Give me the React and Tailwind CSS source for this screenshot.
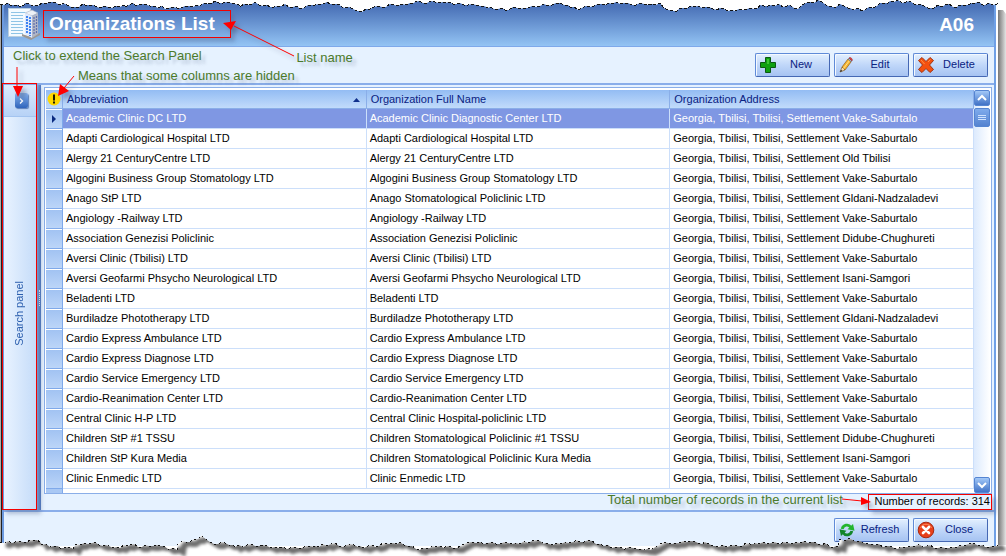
import React from "react";

const VAKE = "Georgia, Tbilisi, Tbilisi, Settlement Vake-Saburtalo";
const OLD = "Georgia, Tbilisi, Tbilisi, Settlement Old Tbilisi";
const GLDANI = "Georgia, Tbilisi, Tbilisi, Settlement Gldani-Nadzaladevi";
const DIDUBE = "Georgia, Tbilisi, Tbilisi, Settlement Didube-Chughureti";
const ISANI = "Georgia, Tbilisi, Tbilisi, Settlement Isani-Samgori";

const ROWS = [
  ["Academic Clinic DC LTD", "Academic Clinic Diagnostic Center LTD", VAKE],
  ["Adapti Cardiological Hospital LTD", "Adapti Cardiological Hospital LTD", VAKE],
  ["Alergy 21 CenturyCentre LTD", "Alergy 21 CenturyCentre LTD", OLD],
  ["Algogini Business Group Stomatology LTD", "Algogini Business Group Stomatology LTD", VAKE],
  ["Anago StP LTD", "Anago Stomatological Policlinic LTD", GLDANI],
  ["Angiology -Railway LTD", "Angiology -Railway LTD", VAKE],
  ["Association Genezisi Policlinic", "Association Genezisi Policlinic", DIDUBE],
  ["Aversi Clinic (Tbilisi) LTD", "Aversi Clinic (Tbilisi) LTD", VAKE],
  ["Aversi Geofarmi Phsycho Neurological LTD", "Aversi Geofarmi Phsycho Neurological LTD", ISANI],
  ["Beladenti LTD", "Beladenti LTD", VAKE],
  ["Burdiladze Phototherapy LTD", "Burdiladze Phototherapy LTD", GLDANI],
  ["Cardio Express Ambulance LTD", "Cardio Express Ambulance LTD", VAKE],
  ["Cardio Express Diagnose LTD", "Cardio Express Diagnose LTD", VAKE],
  ["Cardio Service Emergency LTD", "Cardio Service Emergency LTD", VAKE],
  ["Cardio-Reanimation Center LTD", "Cardio-Reanimation Center LTD", VAKE],
  ["Central Clinic H-P LTD", "Central Clinic Hospital-policlinic LTD", VAKE],
  ["Children StP #1 TSSU", "Children Stomatological Policlinic #1 TSSU", DIDUBE],
  ["Children StP Kura Media", "Children Stomatological Policlinic Kura Media", ISANI],
  ["Clinic Enmedic LTD", "Clinic Enmedic LTD", VAKE],
];

const TOP_EDGE = [
  [0, 4], [10, 4], [20, 6], [25, 4], [38, 5], [50, 2], [63, 4], [75, 7], [85, 4], [100, 7], [125, 6], [135, 4], [150, 5],
  [165, 8], [185, 7], [200, 5], [215, 2], [235, 3], [240, 6], [255, 3], [270, 7], [285, 5], [300, 8], [315, 4], [330, 3],
  [345, 7], [362, 11], [370, 8], [390, 5], [410, 4], [415, 2], [445, 2], [460, 4], [480, 5], [490, 8], [505, 9], [520, 8],
  [540, 6], [560, 3], [570, 6], [578, 9], [590, 6], [605, 4], [612, 3], [640, 4], [660, 4], [669, 11], [680, 9], [690, 6],
  [705, 7], [720, 9], [735, 10], [750, 9], [760, 6], [775, 5], [790, 6], [800, 8], [806, 2], [822, 1], [828, 7], [840, 5],
  [850, 8], [865, 10], [880, 4], [890, 1], [910, 2], [920, 5], [930, 8], [945, 5], [960, 6], [975, 2], [985, 5], [998, 3],
];

const BOTTOM_EDGE = [
  [0, 12], [15, 12], [30, 11], [37, 9], [42, 14], [50, 16], [60, 17], [73, 18], [76, 14], [95, 13], [105, 16], [120, 17],
  [130, 15], [145, 16], [160, 15], [170, 19], [177, 19], [178, 13], [190, 11], [203, 6], [210, 13], [225, 13], [235, 16],
  [255, 15], [275, 17], [290, 18], [315, 16], [335, 14], [345, 17], [350, 13], [360, 17], [375, 16], [385, 13], [400, 13],
  [412, 17], [422, 19], [432, 16], [445, 17], [460, 17], [468, 11], [480, 13], [500, 13], [520, 13], [540, 10], [545, 14],
  [565, 13], [580, 11], [592, 11], [600, 14], [612, 17], [625, 18], [650, 19], [655, 18], [660, 13], [675, 13], [690, 11],
  [705, 13], [715, 16], [730, 16], [755, 13], [780, 13], [810, 12], [825, 14], [832, 17], [838, 16], [840, 10], [850, 9],
  [860, 12], [875, 14], [890, 17], [900, 18], [915, 15], [930, 16], [945, 18], [960, 16], [975, 13], [985, 17], [998, 15],
];

const JITTER = [0, 1, -1, 1, 0, -1, 1, 1, -1, 0, 1];

// Fills the gaps between the anchors with small steps for a ripped-paper outline.
function ragged(anchors) {
  const pts = [];
  let n = 0;
  for (let i = 0; i < anchors.length - 1; i++) {
    const [x0, y0] = anchors[i];
    const [x1, y1] = anchors[i + 1];
    for (let x = x0; x < x1; x += 4) {
      const y = Math.round(y0 + ((y1 - y0) * (x - x0)) / (x1 - x0));
      pts.push(`${x},${y + JITTER[n++ % JITTER.length]}`);
    }
  }
  pts.push(anchors[anchors.length - 1].join(","));
  return pts.join(" ");
}

const TOP_POINTS = ragged(TOP_EDGE);
const BOTTOM_POINTS = ragged(BOTTOM_EDGE);

function TornTop() {
  return (
    <svg className="pointer-events-none absolute top-0 left-0 h-4 w-full" viewBox="0 0 1006 16" preserveAspectRatio="none" aria-hidden="true">
      <polygon points={`0,0 ${TOP_POINTS} 1006,14 1006,0`} fill="#fff" />
      <polyline points={TOP_POINTS} fill="none" stroke="#111" strokeWidth="1" strokeDasharray="3 2" shapeRendering="crispEdges" />
    </svg>
  );
}

function TornBottom() {
  return (
    <svg className="pointer-events-none absolute bottom-0 left-0 h-[26px] w-full" viewBox="0 0 1006 26" preserveAspectRatio="none" aria-hidden="true">
      <defs>
        <filter id="soft" x="-5%" y="-50%" width="110%" height="200%">
          <feGaussianBlur stdDeviation="1.8" />
        </filter>
        <clipPath id="below">
          <polygon points={`0,27 ${BOTTOM_POINTS} 1006,15 1006,27`} />
        </clipPath>
      </defs>
      <polygon points={`0,27 ${BOTTOM_POINTS} 1006,15 1006,27`} fill="#fff" />
      <g clipPath="url(#below)">
        <polyline points={BOTTOM_POINTS} transform="translate(6 2)" fill="none" stroke="#6e6e6e" strokeWidth="6" filter="url(#soft)" />
      </g>
      <polyline points={BOTTOM_POINTS} fill="none" stroke="#111" strokeWidth="1" strokeDasharray="2 3" shapeRendering="crispEdges" />
    </svg>
  );
}

function ListIcon() {
  return (
    <svg width="34" height="34" viewBox="0 0 34 34" aria-hidden="true">
      <rect x="1.5" y="1.5" width="22" height="28" fill="#f4faff" stroke="#b9cfe0" />
      <path d="M4 5.500h14M4 8.500h12M4 11.500h12M4 14.500h12M4 17.500h12M4 20.500h12M4 23.500h12M4 26.500h12" stroke="#8fc4e6" />
      <path d="M15 29l9 4 9-5v-2l-9 4-9-3z" fill="#9b9793" />
      <path d="M18 6l7-3 6 3-6 3z" fill="#eef1f6" stroke="#a9b2c4" strokeWidth=".6" />
      <path d="M18 6l7 3v22l-7-4z" fill="#dfe9fb" />
      <path d="M25 9l6-3v21l-6 4z" fill="#b1b6c6" />
      <path d="M20 9v18M23 10v19" stroke="#2f78f0" strokeWidth="1.800" strokeDasharray="2 1" />
      <path d="M27 10v18M29.500 9v17" stroke="#5c6dae" strokeWidth="1.200" strokeDasharray="2 1" />
    </svg>
  );
}

function PlusIcon() {
  return (
    <svg width="18" height="18" viewBox="0 0 18 18" aria-hidden="true">
      <path d="M6.500 1.500h5v5h5v5h-5v5h-5v-5h-5v-5h5z" fill="#0fa00f" stroke="#0b5a12" />
      <path d="M8 3h2v5H3V8h5z" fill="#3cc534" />
    </svg>
  );
}

function PencilIcon() {
  return (
    <svg width="18" height="18" viewBox="0 0 18 18" aria-hidden="true">
      <path d="M2 16l2-5 3 3z" fill="#f3dcb0" stroke="#7d5a2c" strokeWidth=".7" />
      <path d="M2 16l1-2.300 1.300 1.300z" fill="#222" />
      <path d="M4 11l6-8 3 3-6 8z" fill="#f7b531" stroke="#8a5a1d" strokeWidth=".7" />
      <path d="M5.500 12.500l6-8" stroke="#ffe08a" />
      <path d="M10 3l1-1 3 3-1 1z" fill="#aab0bb" stroke="#666" strokeWidth=".5" />
      <path d="M11 2c1-1.500 4.500 1 3 3z" fill="#e2413c" stroke="#8d2430" strokeWidth=".5" />
    </svg>
  );
}

function CrossIcon() {
  return (
    <svg width="18" height="18" viewBox="0 0 18 18" aria-hidden="true">
      <path d="M5 1.500l4 4 4-4 3.500 3-4 4.500 4 4.500-3.500 3-4-4-4 4-3.500-3 4-4.500-4-4.500z" fill="#f4500f" stroke="#a03413" strokeLinejoin="round" />
      <path d="M4 4l3.500 4M13.500 3.500L11 6" stroke="#ff9148" />
    </svg>
  );
}

function RefreshIcon() {
  return (
    <svg width="18" height="18" viewBox="0 0 18 18" aria-hidden="true">
      <path d="M4.200 8C5 3.800 10.500 2.600 12.800 6.200" fill="none" stroke="#24b52e" strokeWidth="2.800" />
      <path d="M9.500 8.300L16.500 9.800 15 3z" fill="#24b52e" />
      <path d="M13.800 10c-.8 4.200-6.300 5.400-8.600 1.800" fill="none" stroke="#12852a" strokeWidth="2.800" />
      <path d="M8.500 9.700L1.500 8.200 3 15z" fill="#12852a" />
    </svg>
  );
}

function CloseIcon() {
  return (
    <svg width="18" height="18" viewBox="0 0 18 18" aria-hidden="true">
      <circle cx="9" cy="9" r="7.800" fill="#e8401a" stroke="#a52a12" />
      <path d="M3.500 7C5 2 13 2 14.500 7" stroke="#ff8a5a" fill="none" />
      <path d="M6 6l6 6M12 6l-6 6" stroke="#fff" strokeWidth="2.600" strokeLinecap="round" />
    </svg>
  );
}

function ActionButton({ icon, children }) {
  return (
    <button
      type="button"
      className="flex h-6 min-w-[75px] items-center rounded-[2px] border border-[#5f8bd8] border-r-[#4568b4] border-b-[#4568b4] bg-linear-to-b from-[#e3f0fe] via-[#c0d7f9] to-[#a6c3f2] pr-2 pl-[3px] text-[11px] text-[#0a2282] shadow-[inset_1px_1px_0_#f4f9ff]"
    >
      {icon}
      <span className="flex-1 pl-1 text-center">{children}</span>
    </button>
  );
}

const SCROLL_BUTTON =
  "flex h-4 w-4 items-center justify-center rounded-[2px] border border-[#5585d2] bg-linear-to-b from-[#a3c8f7] to-[#4172c6]";

function Chevron({ d }) {
  return (
    <svg width="10" height="8" viewBox="0 0 10 8" aria-hidden="true">
      <path d={d} fill="none" stroke="#fff" strokeWidth="2" />
    </svg>
  );
}

const NOTE =
  "pointer-events-none absolute text-[13px] leading-4 whitespace-nowrap text-[#4b7a2b] [text-shadow:4px_4px_3px_rgba(90,110,140,0.3)]";

function Arrow({ className, width, height, line, head }) {
  return (
    <svg className={"pointer-events-none absolute overflow-visible drop-shadow-[4px_4px_2px_rgba(80,90,120,0.45)] " + className} width={width} height={height} aria-hidden="true">
      <path d={line} stroke="#f00" fill="none" />
      <path d={head} fill="#f00" />
    </svg>
  );
}

const RED_FRAME =
  "pointer-events-none absolute border border-[#f40000] shadow-[4px_4px_4px_rgba(80,100,140,0.35)]";

function ColumnTitle({ children, sorted }) {
  return (
    <th scope="col" aria-sort={sorted ? "ascending" : undefined} className="border-r border-b border-[#8aaee8] p-0 font-normal">
      <button type="button" className="flex h-[18px] w-full items-center justify-between pt-px pr-1.5 pl-1 text-left text-[11px] text-[#0a2282]">
        {children}
        {sorted && (
          <svg width="7" height="4" viewBox="0 0 7 4" aria-hidden="true">
            <path d="M0 4L3.500 0 7 4z" fill="#10308c" />
          </svg>
        )}
      </button>
    </th>
  );
}

const MARKER_CELL =
  "h-5 border-r border-b border-[#7fa9ea] bg-linear-to-b from-[#a0c2f2] to-[#bcd5f8] p-0 shadow-[inset_0_1px_0_#fff]";

function RecordTable() {
  return (
    <table className="w-full table-fixed border-separate border-spacing-0 text-[11px]">
      <colgroup>
        <col className="w-[17px]" />
        <col />
        <col />
        <col />
      </colgroup>
      <thead>
        <tr className="bg-linear-to-b from-[#93bcf3] to-[#c4ddfb]">
          <th scope="col" aria-label="Some columns are hidden" className="border-r border-b border-[#8aaee8] p-0">
            <svg className="mx-auto" width="14" height="14" viewBox="0 0 14 14" aria-hidden="true">
              <circle cx="7" cy="7" r="6.500" fill="#ffd800" />
              <path d="M6 2.500h2v6H6zM6 9.500h2v2H6z" fill="#1a1a00" />
            </svg>
          </th>
          <ColumnTitle sorted>Abbreviation</ColumnTitle>
          <ColumnTitle>Organization Full Name</ColumnTitle>
          <ColumnTitle>Organization Address</ColumnTitle>
        </tr>
      </thead>
      <tbody>
        {ROWS.map((row, i) => (
          <tr key={row[0]} className={i === 0 ? "bg-[#7f97e3] text-white" : "bg-white text-black"}>
            <td className={MARKER_CELL}>
              {i === 0 && (
                <svg className="mx-auto" width="4" height="8" viewBox="0 0 4 8" aria-hidden="true">
                  <path d="M0 0L4 4 0 8z" fill="#0a2a80" />
                </svg>
              )}
            </td>
            {row.map((text, c) => (
              <td key={c} className="h-5 truncate border-r border-b border-[#ccdffa] py-0 pr-1 pl-[3px]">
                {text}
              </td>
            ))}
          </tr>
        ))}
      </tbody>
    </table>
  );
}

function Sidebar() {
  return (
    <aside className="relative flex w-8 shrink-0 flex-col bg-linear-to-r from-[#e9f3ff] to-[#c5dcf9]">
      <div className="flex h-8 justify-center border-b border-[#a3c4f0] bg-linear-to-b from-[#dcebfd] to-[#b7d2f6] pt-2 pl-0.5">
        <button type="button" aria-label="Extend the search panel" className="flex h-[15px] w-[13px] items-center justify-center rounded-[2px] bg-linear-to-b from-[#86b2ee] to-[#2f64bb] shadow-[1px_1px_1px_#5c7fb8]">
          <svg width="5" height="6" viewBox="0 0 5 6" aria-hidden="true">
            <path d="M1 .5L3.500 3 1 5.500" fill="none" stroke="#fff" strokeWidth="1.300" />
          </svg>
        </button>
      </div>
      <div className="flex flex-1 items-center justify-center">
        <span className="rotate-180 text-[11px] text-[#2c5fae] [writing-mode:vertical-rl]">Search panel</span>
      </div>
      <div className={RED_FRAME + " -top-0.5 bottom-0 -left-0.5 -right-px"} />
      <Arrow className="top-0 left-0" width="30" height="14" line="M13 -18V4" head="M9 1h10l-5 11z" />
    </aside>
  );
}

export default function App() {
  return (
    <div className="relative flex w-full overflow-hidden bg-white pb-2.5 font-['Liberation_Sans',Arial,sans-serif] leading-tight">
      <div className="w-0.5 shrink-0 bg-linear-to-r from-white to-black" />
      <div className="flex min-w-0 flex-1 flex-col border-x-2 border-l-[#6c9ae0] border-r-[#6fa0e6] bg-[#e6f2ff]">
        <header className="flex h-[47px] items-center justify-between border-b border-[#7fa9ea] bg-linear-to-b from-[#4b72b8] from-15% to-[#94c4f4] pt-0.5 pr-5 pl-[3px]">
          <div className="flex items-center">
            <ListIcon />
            <div className="relative ml-0.5 px-1.5">
              <h1 className="text-[19px] leading-7 font-bold text-white">Organizations List</h1>
              <div className={RED_FRAME + " -right-2.5 inset-y-0 left-0"} />
              <Arrow className="top-0 -right-2.5" width="1" height="1" line="M64 46L4 16" head="M-7 13L6 11 1 20z" />
              <span className={NOTE + " top-10 -right-[132px]"}>List name</span>
            </div>
          </div>
          <span className="pt-0.5 text-[19px] font-bold text-white">A06</span>
        </header>

        <div className="relative flex h-9 items-center justify-end gap-1 pr-1.5">
          <span className={NOTE + " top-[1px] left-[9px]"}>Click to extend the Search Panel</span>
          <span className={NOTE + " top-[21px] left-[74px]"}>Means that some columns are hidden</span>
          <Arrow className="top-0 left-0" width="1" height="1" line="M70 29L60 41" head="M54 49L56 37 65 44z" />
          <ActionButton icon={<PlusIcon />}>New</ActionButton>
          <ActionButton icon={<PencilIcon />}>Edit</ActionButton>
          <ActionButton icon={<CrossIcon />}>Delete</ActionButton>
        </div>

        <main className="flex border-y-2 border-[#8aaeea]">
          <Sidebar />
          <div className="flex w-[5px] shrink-0 items-center justify-center border-l border-[#b0ccf4] bg-linear-to-r from-[#8ab2ea] to-[#4c76bf]">
            <span className="h-4 border-l border-dotted border-white" />
          </div>
          <div className="flex min-w-0 flex-1 flex-col pt-0.5 pr-0.5 pl-[3px]">
            <div className="flex border border-[#8aaee8] bg-white pt-0.5 pr-px pl-px">
              <div className="h-[403px] min-w-0 flex-1 overflow-hidden">
                <RecordTable />
                <div className="h-1 w-[17px] border-r border-[#7fa9ea] bg-[#a9c8f4]" />
              </div>
              <div className="flex w-4 shrink-0 flex-col items-center bg-linear-to-r from-[#dceafd] to-white">
                <button type="button" aria-label="Scroll up" className={SCROLL_BUTTON}>
                  <Chevron d="M1 6l4-4 4 4" />
                </button>
                <div className="mt-0.5 flex h-[19px] w-4 flex-col items-center justify-center gap-px rounded-[2px] border border-[#5585d2] bg-linear-to-b from-[#7fabec] to-[#5583d0]">
                  <span className="h-px w-2 bg-[#cfe2ff]" />
                  <span className="h-px w-2 bg-[#cfe2ff]" />
                  <span className="h-px w-2 bg-[#cfe2ff]" />
                </div>
                <button type="button" aria-label="Scroll down" className={SCROLL_BUTTON + " mt-auto"}>
                  <Chevron d="M1 2l4 4 4-4" />
                </button>
              </div>
            </div>
            <div className="flex h-4 items-center justify-end">
              <p className="relative flex h-4 items-center pr-0.5 pl-1.5 text-[11px] text-black">
                Number of records: 314
                <span className={RED_FRAME + " inset-0"} />
                <span className={NOTE + " right-[149px] -top-0.5"}>Total number of records in the current list</span>
                <Arrow className="top-0 left-0" width="1" height="1" line="M-26 5L-6 7" head="M-7 3L3 8 -7 11z" />
              </p>
            </div>
          </div>
        </main>

        <footer className="flex h-[34px] items-start justify-end gap-1 pt-1.5 pr-1.5">
          <ActionButton icon={<RefreshIcon />}>Refresh</ActionButton>
          <ActionButton icon={<CloseIcon />}>Close</ActionButton>
        </footer>
      </div>
      <div className="mt-2.5 w-2.5 shrink-0 border-l-2 border-white bg-linear-to-r from-[#777] to-[#e4e4e4]" />
      <TornTop />
      <TornBottom />
    </div>
  );
}
